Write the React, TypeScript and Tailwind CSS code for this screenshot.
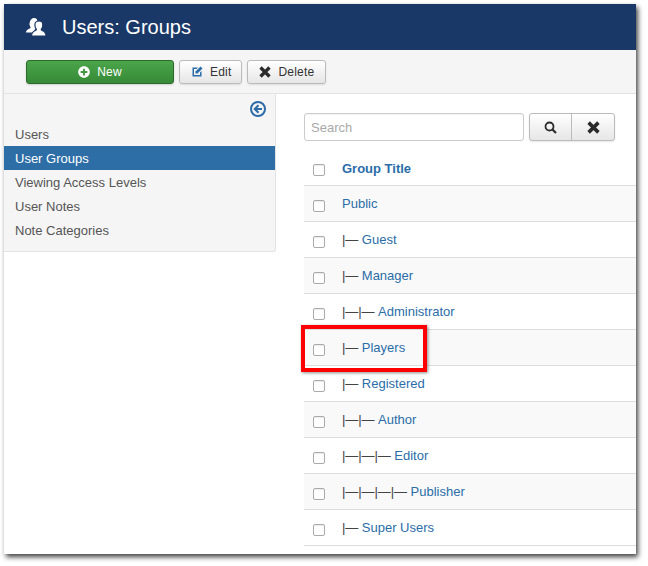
import React from "react";
import { FaPlusCircle } from "react-icons/fa";

const rows = [
  ["", "Public"],
  ["|— ", "Guest"],
  ["|— ", "Manager"],
  ["|—|— ", "Administrator"],
  ["|— ", "Players"],
  ["|— ", "Registered"],
  ["|—|— ", "Author"],
  ["|—|—|— ", "Editor"],
  ["|—|—|—|— ", "Publisher"],
  ["|— ", "Super Users"],
];

function Check() {
  return <span className="block w-3 h-3 rounded-[2px] border border-[#aaa] bg-white shadow-[inset_0_1px_1px_rgba(0,0,0,0.08)]" />;
}

function Cross({ size }: { size: number }) {
  return (
    <svg width={size} height={size} viewBox="0 0 12 12" fill="none" stroke="#2b2b2b" strokeWidth="3.3">
      <path d="M1.500 1.500L10.500 10.500M10.500 1.500L1.500 10.500" />
    </svg>
  );
}

function ToolButton({ children }: { children: React.ReactNode }) {
  return (
    <button className="h-6 flex items-center gap-[7px] pl-[11px] pr-[10px] rounded-[3px] border border-[#bbb] bg-gradient-to-b from-white to-[#e6e6e6] text-[12px] tracking-[0.2px] text-[#333] shadow-[0_1px_2px_rgba(0,0,0,0.1)]">
      {children}
    </button>
  );
}

export default function App() {
  return (
    <div className="w-[648px] h-[566px] p-1 bg-white font-['Liberation_Sans',Arial,sans-serif]">
      <div className="relative w-[632px] h-[550px] overflow-hidden bg-white shadow-[2px_3px_5px_rgba(0,0,0,0.75)]">
        <header className="h-[46px] bg-[#1a3867] flex items-center pl-[22px] gap-[16px] text-white">
          <svg width="20" height="19" viewBox="0 0 20 19">
            <path fill="#fff" d="M8 0c2.300 0 3.500 1.700 3.500 3.800 0 1.400-.4 2.700-1.200 3.700-.3.500-.2 1 .3 1.300L7 14.500H0c0-2.500 2-3.400 3.900-4.100.7-.3.800-.9.400-1.600C3.400 7.700 3.300 6 3.800 4 4.300 1.700 6 0 8 0z" />
            <path fill="#fff" stroke="#1a3867" strokeWidth="1.200" d="M13 3c2.400 0 3.800 1.700 3.800 3.900 0 1.500-.5 3-1.300 4-.4.600-.2 1.100.4 1.400 1.900.8 4.100 1.500 4.100 5.700H5.500c0-4.200 2.300-4.900 4.200-5.700.6-.3.800-.8.400-1.400-.8-1-1.200-2.500-1.200-4C8.900 4.700 10.500 3 13 3z" />
          </svg>
          <span className="text-[20px] leading-none">Users: Groups</span>
        </header>

        <div className="h-11 bg-[#f5f5f5] border-b border-[#e3e3e3] flex items-center pl-[22px] gap-[5px]">
          <button className="w-[148px] h-6 flex items-center justify-center gap-[7px] rounded-[3px] border border-[#2c6a2c] bg-gradient-to-b from-[#4aa54a] to-[#378a37] text-[12px] tracking-[0.2px] text-white shadow-[0_1px_2px_rgba(0,0,0,0.15)]">
            <FaPlusCircle className="w-3 h-3" />
            <span className="pt-[1px]">New</span>
          </button>
          <ToolButton>
            <svg width="12" height="12" viewBox="0 0 12 12">
              <path fill="#2a6da8" d="M1.500 1.500H7L5.500 3H3v6h6V6.500l1.500-1.500V10.500h-9z" />
              <path fill="#2a6da8" d="M9.500 0.500L11.500 2.500 6.500 7.500 4.500 7.500 4.500 5.500z" />
            </svg>
            <span className="pt-[1px]">Edit</span>
          </ToolButton>
          <ToolButton>
            <Cross size={12} />
            <span className="pt-[1px] pr-[1px]">Delete</span>
          </ToolButton>
        </div>

        <div className="flex items-start">
          <aside className="w-[272px] h-[158px] shrink-0 bg-[#f5f5f5] border-r border-b border-[#e3e3e3] rounded-br-[3px] flex flex-col text-[13px] text-[#555]">
            <div className="h-7 flex justify-end items-center pr-[9px] pt-[2px]">
              <svg width="16" height="16" viewBox="0 0 16 16" fill="none" stroke="#2d6ca8">
                <circle cx="8" cy="8" r="7" strokeWidth="2" />
                <path d="M8.500 4.200L4.700 8l3.800 3.800M5 8h7" strokeWidth="2" />
              </svg>
            </div>
            {["Users", "User Groups", "Viewing Access Levels", "User Notes", "Note Categories"].map((item) => (
              <div
                key={item}
                className={`h-6 flex items-center pl-[11px] pt-[1px] ${item === "User Groups" ? "bg-[#2d6ea7] text-white" : ""}`}
              >
                {item}
              </div>
            ))}
          </aside>

          <main className="flex-1 pl-7 pt-[19px] min-w-0">
            <div className="flex gap-[5px] h-7">
              <div className="w-[220px] h-7 border border-[#ccc] rounded-[3px] flex items-center pl-[6px] pt-[1px] text-[13px] text-[#a9a9a9] shadow-[inset_0_1px_1px_rgba(0,0,0,0.05)]">
                Search
              </div>
              <div className="flex h-7 rounded-[3px] border border-[#bbb] bg-gradient-to-b from-white to-[#e6e6e6] text-[#2b2b2b] shadow-[0_1px_2px_rgba(0,0,0,0.1)]">
                <span className="w-[42px] flex items-center justify-center border-r border-[#bbb]">
                  <svg width="13" height="13" viewBox="0 0 13 13" fill="none" stroke="#2b2b2b">
                    <circle cx="5.500" cy="5.500" r="4" strokeWidth="1.800" />
                    <path d="M8.500 8.500L12 12" strokeWidth="2.200" />
                  </svg>
                </span>
                <span className="w-[42px] flex items-center justify-center">
                  <Cross size={13} />
                </span>
              </div>
            </div>

            <div className="mt-[13px] h-8 pb-[2px] flex items-center border-b border-[#ddd] text-[13px] font-bold text-[#2a6da8]">
              <span className="w-[9px]" />
              <span className="mt-[2px]"><Check /></span>
              <span className="ml-[17px]">Group Title</span>
            </div>

            {rows.map(([prefix, name], i) => (
              <div
                key={name}
                className={`h-9 flex border-b border-[#ddd] text-[13px] ${i % 2 === 0 ? "bg-[#f9f9f9]" : "bg-white"}`}
              >
                <span className="w-[9px]" />
                <span className="pt-[14px]"><Check /></span>
                <span className="ml-[17px] pt-[10px] leading-[15px] text-[#2a6da8] whitespace-pre">
                  <span className="text-[#444] tracking-[-0.06px]">{prefix}</span>
                  {name}
                </span>
              </div>
            ))}
          </main>
        </div>

        <div className="absolute left-[297px] top-[321px] w-[126px] h-[47px] border-[4px] border-[#f00] shadow-[1px_1px_3px_rgba(0,0,0,0.45)]" />
      </div>
    </div>
  );
}
